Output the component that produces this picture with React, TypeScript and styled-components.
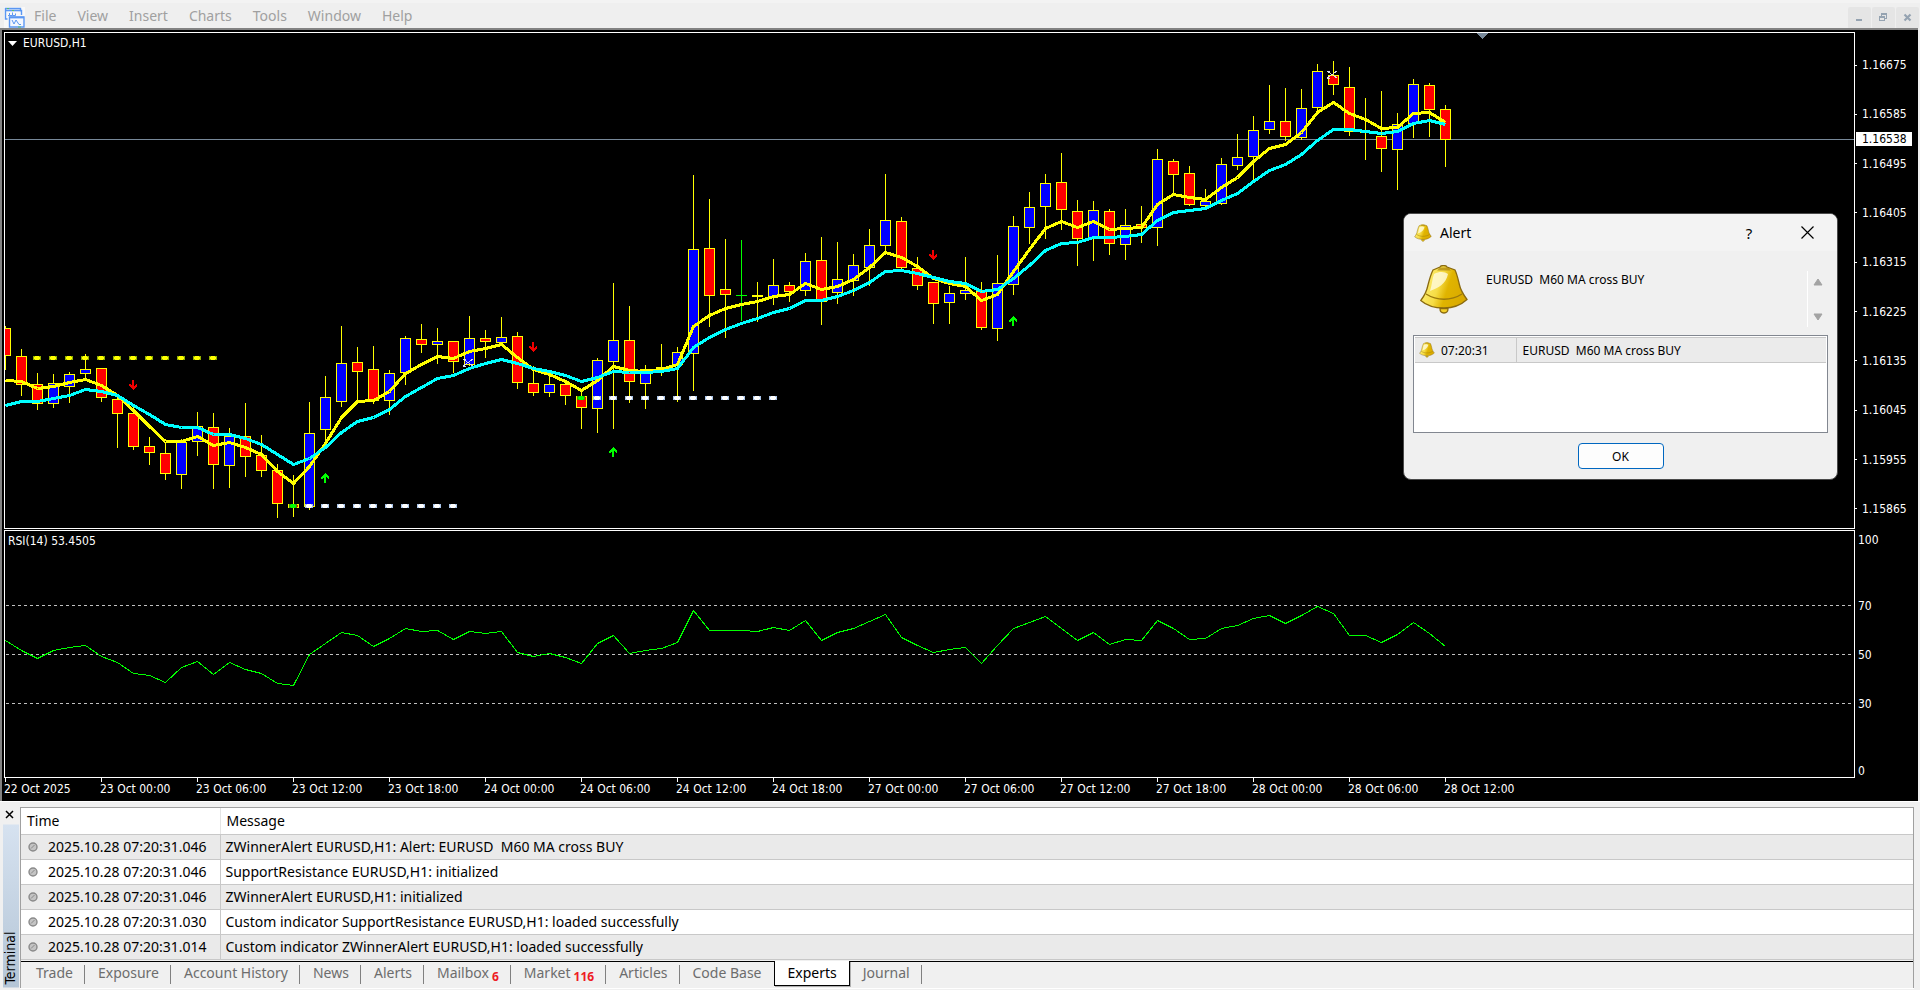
import React from "react";
import styled, { createGlobalStyle, css } from "styled-components";

const UI_FONT = '"Noto Sans", "Open Sans", sans-serif';
const CHART_FONT = '"DejaVu Sans Condensed", "DejaVu Sans", sans-serif';

const GlobalStyle = createGlobalStyle`
  *, *::before, *::after { box-sizing: border-box; }
  body { margin: 0; background: #f0f0f0; font-family: ${UI_FONT}; font-size: 14px; color: #000; }
  button { font: inherit; color: inherit; background: none; border: 0; padding: 0; margin: 0; }
  svg { display: block; }
`;

/* ---------- data ---------- */

type Tone = "up" | "down" | "flat" | "doji";
type Candle = [high: number, low: number, top: number, bottom: number, tone: Tone];

const STEP = 16;
const PRICE_TOP = 33;
const RSI_TOP = 531;

const candles: Candle[] = [
  [326, 369, 328, 355, "down"], [349, 395, 356, 384, "down"], [373, 409, 384, 403, "down"],
  [374, 407, 383, 403, "up"], [372, 402, 374, 386, "up"], [354, 380, 369, 373, "up"],
  [368, 401, 368, 397, "down"], [395, 447, 399, 413, "down"], [406, 449, 413, 446, "down"],
  [437, 464, 446, 452, "down"], [442, 479, 453, 473, "down"], [439, 488, 442, 474, "up"],
  [412, 455, 426, 441, "up"], [413, 488, 427, 464, "down"], [428, 487, 436, 465, "up"],
  [403, 476, 436, 456, "down"], [435, 476, 455, 470, "down"], [464, 517, 470, 503, "down"],
  [475, 516, 504, 507, "down"], [402, 509, 433, 506, "up"], [376, 446, 397, 429, "up"],
  [326, 406, 363, 401, "up"], [347, 402, 362, 371, "down"], [346, 403, 369, 400, "down"],
  [370, 414, 373, 400, "up"], [336, 384, 338, 372, "up"], [324, 352, 339, 344, "down"],
  [328, 363, 341, 344, "up"], [341, 372, 341, 361, "down"], [316, 365, 338, 364, "up"],
  [330, 357, 338, 341, "down"], [317, 344, 337, 342, "up"], [332, 388, 336, 382, "down"],
  [366, 395, 383, 392, "down"], [375, 396, 384, 392, "up"], [382, 404, 384, 395, "down"],
  [390, 428, 396, 407, "down"], [358, 432, 360, 408, "up"], [283, 428, 340, 361, "up"],
  [306, 402, 340, 381, "down"], [365, 408, 369, 383, "up"], [344, 375, 367, 369, "up"],
  [347, 401, 352, 364, "up"], [175, 390, 249, 353, "up"], [199, 326, 248, 295, "down"],
  [239, 337, 289, 294, "down"], [240, 320, 295, 295, "flat"], [282, 321, 295, 296, "doji"],
  [259, 304, 285, 296, "up"], [282, 301, 285, 291, "down"], [253, 295, 261, 290, "up"],
  [237, 324, 260, 301, "down"], [242, 303, 279, 292, "up"], [254, 295, 265, 280, "up"],
  [229, 285, 245, 267, "up"], [174, 253, 220, 245, "up"], [217, 270, 221, 267, "down"],
  [257, 289, 268, 285, "down"], [282, 323, 282, 303, "down"], [286, 323, 293, 302, "up"],
  [257, 299, 290, 293, "up"], [282, 329, 291, 327, "down"], [255, 340, 283, 328, "up"],
  [216, 294, 226, 284, "up"], [192, 243, 207, 227, "up"], [174, 238, 183, 206, "up"],
  [153, 229, 182, 209, "down"], [200, 265, 211, 238, "down"], [201, 260, 210, 237, "up"],
  [209, 254, 211, 243, "down"], [209, 259, 225, 244, "up"], [206, 242, 224, 227, "down"],
  [149, 245, 159, 227, "up"], [159, 195, 161, 174, "down"], [166, 205, 173, 204, "down"],
  [189, 209, 201, 205, "up"], [158, 204, 164, 203, "up"], [134, 169, 157, 165, "up"],
  [116, 180, 130, 156, "up"], [85, 133, 121, 129, "up"], [88, 140, 121, 136, "down"],
  [89, 139, 108, 137, "up"], [64, 113, 71, 107, "up"], [61, 94, 75, 84, "down"],
  [67, 135, 87, 131, "down"], [98, 159, 131, 132, "doji"], [91, 171, 136, 148, "down"],
  [113, 189, 124, 149, "up"], [79, 137, 84, 123, "up"], [83, 136, 85, 109, "down"],
  [105, 166, 109, 139, "down"],
];

const fastMa = [
  380, 381, 388, 386, 382, 379, 385, 395, 410, 426, 441, 441, 436, 445, 442, 447, 454, 471, 483, 466,
  443, 417, 401, 400, 391, 373, 364, 356, 358, 351, 348, 344, 357, 369, 374, 381, 390, 380, 366, 370,
  371, 369, 364, 326, 315, 308, 304, 301, 296, 294, 283, 289, 286, 279, 267, 252, 257, 266, 278, 283,
  286, 300, 294, 271, 249, 228, 221, 227, 221, 229, 228, 227, 204, 194, 197, 199, 187, 177, 161, 148,
  144, 132, 112, 102, 113, 119, 128, 127, 113, 112, 122,
];

const slowMa = [
  405, 401, 401, 398, 395, 389, 391, 395, 405, 414, 424, 427, 427, 434, 434, 438, 444, 454, 464, 458,
  447, 432, 421, 417, 409, 396, 387, 378, 375, 368, 363, 359, 363, 368, 371, 375, 381, 377, 371, 372,
  372, 371, 368, 347, 337, 329, 323, 318, 312, 308, 300, 300, 296, 290, 282, 271, 270, 273, 277, 281,
  283, 291, 289, 278, 265, 250, 243, 242, 237, 237, 236, 234, 220, 212, 210, 208, 200, 193, 181, 170,
  164, 154, 140, 129, 129, 131, 133, 131, 123, 120, 124,
];

const rsi = [
  640, 650, 658, 650, 647, 645, 656, 662, 673, 675, 682, 667, 661, 674, 662, 669, 673, 683, 685, 654,
  643, 632, 635, 646, 638, 628, 631, 630, 639, 631, 633, 631, 652, 656, 653, 657, 663, 643, 635, 653,
  650, 648, 642, 610, 630, 630, 630, 631, 627, 630, 620, 640, 632, 628, 621, 614, 637, 645, 652, 649,
  647, 663, 645, 628, 622, 616, 628, 640, 632, 644, 639, 640, 620, 628, 639, 638, 628, 625, 618, 615,
  623, 615, 606, 613, 635, 635, 642, 634, 622, 633, 646,
];

const range = (from: number, to: number) => Array.from({ length: to - from + 1 }, (_, k) => from + k);

const priceLabels = [
  "1.16675", "1.16585", "1.16495", "1.16405", "1.16315",
  "1.16225", "1.16135", "1.16045", "1.15955", "1.15865",
];

const timeLabels = [
  "22 Oct 2025", "23 Oct 00:00", "23 Oct 06:00", "23 Oct 12:00", "23 Oct 18:00", "24 Oct 00:00",
  "24 Oct 06:00", "24 Oct 12:00", "24 Oct 18:00", "27 Oct 00:00", "27 Oct 06:00", "27 Oct 12:00",
  "27 Oct 18:00", "28 Oct 00:00", "28 Oct 06:00", "28 Oct 12:00",
];

const logRows = [
  ["2025.10.28 07:20:31.046", "ZWinnerAlert EURUSD,H1: Alert: EURUSD  M60 MA cross BUY"],
  ["2025.10.28 07:20:31.046", "SupportResistance EURUSD,H1: initialized"],
  ["2025.10.28 07:20:31.046", "ZWinnerAlert EURUSD,H1: initialized"],
  ["2025.10.28 07:20:31.030", "Custom indicator SupportResistance EURUSD,H1: loaded successfully"],
  ["2025.10.28 07:20:31.014", "Custom indicator ZWinnerAlert EURUSD,H1: loaded successfully"],
];

const tabs: { name: string; count?: number }[] = [
  { name: "Trade" }, { name: "Exposure" }, { name: "Account History" }, { name: "News" },
  { name: "Alerts" }, { name: "Mailbox", count: 6 }, { name: "Market", count: 116 },
  { name: "Articles" }, { name: "Code Base" }, { name: "Experts" }, { name: "Journal" },
];

/* ---------- frame ---------- */

const Window = styled.div`
  position: relative;
  display: flex;
  flex-direction: column;
  min-height: 100vh;
  overflow: hidden;
`;

const MenuBar = styled.header`
  display: flex;
  align-items: center;
  height: 28px;
  padding: 4px 0 0 4px;
  border-top: 3px solid #f3f3f3;
  background: #efefef;
`;

const MenuList = styled.nav`
  display: flex;
  flex: 1;
  gap: 21px;
  padding: 0 0 3px 9px;
`;

const MenuItem = styled.button`
  line-height: 20px;
  color: #a0a0a0;
`;

const Logo = styled.svg`
  width: 21px;
  height: 21px;
  background: #f8f8f8;
`;

const WindowButtons = styled.div`
  display: flex;
  gap: 1px;
  padding-right: 1px;
`;

const WindowButton = styled.button`
  display: grid;
  place-items: center;
  width: 23px;
  height: 22px;
  border-radius: 2px;
  background: #e5e5e5;
  color: #95a3b1;
`;

const ChartFrame = styled.main`
  margin-right: 2px;
  padding: 2px 0 0 2px;
  border-top: 2px solid #828282;
  border-left: 2px solid #828282;
  background: #000;
  color: #fff;
  font: 12px/14px ${CHART_FONT};
`;

const PanelRow = styled.section<{ $height: number }>`
  display: grid;
  grid-template-columns: minmax(0, 1fr) 63px;
  height: ${(p) => p.$height}px;
  & + & { margin-top: 1px; }
`;

const Plot = styled.div`
  position: relative;
  border: 1px solid #fff;
  overflow: hidden;
`;

const PlotCanvas = styled.svg`
  width: 100%;
  height: 100%;
  shape-rendering: crispEdges;
`;

const PlotTitle = styled.div`
  position: absolute;
  top: 3px;
  left: 3px;
  display: flex;
  align-items: center;
  gap: 6px;
`;

const PriceAxis = styled.div`
  position: relative;
  display: flex;
  flex-direction: column;
  justify-content: space-between;
  padding: 26px 0 13px;
`;

const AxisLabel = styled.span`
  display: flex;
  align-items: center;
  gap: 5px;
  &::before { content: ""; width: 2px; height: 1px; background: #fff; }
`;

const CurrentPrice = styled.output`
  position: absolute;
  top: 100px;
  left: 1px;
  width: 56px;
  padding-left: 6px;
  background: #fff;
  color: #000;
`;

const RsiAxis = styled.div`
  display: grid;
  grid-template-rows: 51px repeat(3, 49px) 1fr;
  align-items: center;
  padding-left: 3px;
  & > :first-child { align-self: start; padding-top: 3px; }
  & > :last-child { align-self: end; }
`;

const TimeAxis = styled.div`
  display: flex;
  height: 23px;
  overflow: hidden;
`;

const TimeLabel = styled.span`
  flex: 0 0 96px;
  white-space: nowrap;
  &::before { content: ""; display: block; width: 1px; height: 4px; margin-left: 1px; background: #fff; }
`;

/* ---------- terminal ---------- */

const Terminal = styled.section`
  display: flex;
  flex: 1;
  padding: 5px 6px 3px 0;
  border-top: 1px solid #fff;
  background: #f0f0f0;
`;

const TerminalRail = styled.div`
  display: flex;
  flex-direction: column;
  width: 20px;
  padding-left: 3px;
`;

const RailClose = styled.button`
  display: grid;
  place-items: start center;
  width: 13px;
  height: 18px;
  padding-top: 3px;
`;

const RailTitle = styled.h2`
  flex: 1;
  width: 16px;
  margin: 0;
  padding-top: 3px;
  writing-mode: vertical-rl;
  transform: rotate(180deg);
  background: linear-gradient(#b4c5d6, #d6e2f0);
  font: 14px/14px ${CHART_FONT};
  text-align: left;
`;

const TerminalBody = styled.div`
  display: flex;
  flex: 1;
  flex-direction: column;
  border: solid #a0a0a0;
  border-width: 1px 1px 0 1px;
  box-shadow: 0 1px #fff;
`;

const LogTable = styled.table`
  width: 100%;
  table-layout: fixed;
  border-collapse: collapse;
  background: #fff;
`;

const cell = css`
  height: 25px;
  padding: 0 0 0 5px;
  border-bottom: 1px solid #c8c8c8;
  line-height: 20px;
  text-align: left;
  font-weight: 400;
  white-space: pre;
`;

const HeadCell = styled.th<{ $width?: number }>`
  ${cell}
  ${(p) => p.$width && `width: ${p.$width}px; border-right: 1px solid #e4e4e4;`}
  height: 26px;
  padding-left: 6px;
`;

const LogRow = styled.tr`
  &:nth-child(odd) { background: #eaeaea; }
`;

const TimeCell = styled.td`
  ${cell}
  border-right: 1px solid #c8c8c8;
`;

const MessageCell = styled.td`
  ${cell}
`;

const LogEntry = styled.span`
  display: flex;
  align-items: center;
  gap: 10px;
  padding-left: 2px;
`;

const TabBar = styled.div`
  display: flex;
  height: 27px;
  margin-top: 1px;
  padding-left: 2px;
  border-top: 1px solid #000;
`;

const Tab = styled.button<{ $active: boolean }>`
  position: relative;
  display: flex;
  height: 24px;
  padding: 0 12px 0 13px;
  line-height: 22px;
  color: #6d6d6d;
  &::after {
    content: "";
    position: absolute;
    top: 3px;
    right: 0;
    width: 1px;
    height: 19px;
    background: #808080;
  }
  &:has(+ [aria-selected="true"])::after { display: none; }
  ${(p) =>
    p.$active &&
    css`
      height: 25px;
      margin-top: -1px;
      border: solid #000;
      border-width: 0 1px 1px;
      background: #fff;
      color: #000;
      line-height: 24px;
      box-shadow: 1px 1px #b0b0b0;
      &::after { display: none; }
    `}
`;

const TabCount = styled.span`
  padding: 4px 0 0 3px;
  font-size: 12px;
  font-weight: 700;
  color: #ee1c25;
`;

/* ---------- alert ---------- */

const Dialog = styled.section`
  position: absolute;
  top: 213px;
  right: 82px;
  width: 435px;
  border: 1px solid #4a4a4a;
  border-radius: 8px;
  background: #f0f0f0;
  font-size: 12px;
  overflow: hidden;
`;

const DialogTitle = styled.header`
  display: flex;
  align-items: center;
  height: 37px;
  padding: 0 1px 0 10px;
  background: #f3f3f3;
`;

const DialogName = styled.h1`
  flex: 1;
  margin: 0 0 0 8px;
  font-size: 14px;
  font-weight: 400;
`;

const TitleButton = styled.button`
  display: grid;
  place-items: center;
  width: 58px;
  height: 36px;
  font-size: 15px;
`;

const DialogMessage = styled.div`
  display: grid;
  grid-template-columns: 50px 1fr 22px;
  column-gap: 17px;
  padding: 14px 8px 8px 15px;
`;

const MessageText = styled.p`
  margin: 6px 0 0;
  line-height: 18px;
  white-space: pre;
`;

const Scroller = styled.div`
  display: flex;
  flex-direction: column;
  justify-content: space-between;
  height: 56px;
  margin-top: 6px;
  padding: 6px 0 6px 4px;
  border-left: 1px solid #fff;
  color: #a3a3a3;
`;

const ArrowButton = styled.button`
  display: grid;
  place-items: center;
  width: 11px;
  height: 9px;
`;

const AlertList = styled.div`
  height: 98px;
  margin: 0 9px;
  padding: 1px;
  border: 1px solid #828790;
  background: #fff;
`;

const AlertTable = styled.table`
  width: 100%;
  border-collapse: collapse;
  background: #ebebeb;
`;

const AlertCell = styled.td<{ $width?: number }>`
  height: 25px;
  padding: 0 0 0 6px;
  border: solid #c8c8c8;
  border-width: 1px 0;
  white-space: pre;
  ${(p) => p.$width && `width: ${p.$width}px; padding-left: 4px; border-right-width: 1px;`}
`;

const AlertTime = styled.span`
  display: flex;
  align-items: center;
  gap: 6px;
`;

const DialogFooter = styled.footer`
  display: flex;
  justify-content: center;
  padding: 10px 0 10px;
`;

const OkButton = styled.button`
  width: 86px;
  height: 26px;
  border: 1px solid #0067c0;
  border-radius: 4px;
  background: #fdfdfd;
`;

/* ---------- drawings ---------- */

function BellIcon({ size }: { size: number }) {
  const id = `bell-${size}`;
  return (
    <svg width={size} height={size} viewBox="0 0 48 50" aria-hidden="true">
      <defs>
        <linearGradient id={id} x1="0" y1="0.3" x2="1" y2="0.6">
          <stop offset="0" stopColor="#fff27a" />
          <stop offset="0.4" stopColor="#f6dc45" />
          <stop offset="0.6" stopColor="#e0b400" />
          <stop offset="1" stopColor="#d9a900" />
        </linearGradient>
      </defs>
      <path d="M20 43.500c0 6 8 6 8 0z" fill="#f3cf28" stroke="#8a6a10" strokeWidth="1.300" />
      <path
        d="M13 5l7-3c1-2 6-2 7 0l8 3c2 4 3 9 4.500 15 1 5 3.500 9 7.500 14.500C40 41 32 43 24 43S7 41 .8 35.500C5 30 7 25 8 20c1.500-6 3-11 5-15z"
        fill={`url(#${id})`}
        stroke="#8a6a10"
        strokeWidth="1.300"
      />
      <path d="M14 9c6-3 11-2 14 0-2 10-10 14-18 17 2-6 2-12 4-17z" fill="#fffbe0" opacity="0.8" />
      <path d="M6 29c11 7 25 7 36 0" fill="none" stroke="#9a780c" strokeWidth="1.300" />
      <path d="M20 2.500h8l3 3H17z" fill="#a8820f" opacity="0.7" />
    </svg>
  );
}

function AppLogo() {
  return (
    <Logo viewBox="0 0 21 21" fill="none" stroke="#5b97f2" aria-hidden="true">
      <path d="M5 1.500h11.500v2h1V8M5 1.500h-3.500v10.500h2" strokeWidth="1.400" />
      <path d="M2 3.500h15" strokeWidth="1.600" />
      <path d="M4 8.500h1.500V6m0 2.500h3V5.500m0 3h3l0-2" />
      <path d="M5.500 12V10h14.500v10H5.500V12" fill="#f4f8ff" strokeWidth="1.400" />
      <path d="M5.500 10.500h14.500" strokeWidth="1.800" />
      <path d="M8 13l2 4 2-4 3 4.500h2" />
      <path d="M3 1.500h2M8 3.500h2M14 20h3" stroke="#59c26a" />
    </Logo>
  );
}

function CandleMark({ x, candle }: { x: number; candle: Candle }) {
  const [high, low, top, bottom, tone] = candle;
  const line = tone === "flat" ? "#00ff00" : "#ffff00";
  const fill = tone === "up" ? "#0000ff" : "#ff0000";
  return (
    <g>
      <rect x={x} y={high} width="1" height={low - high + 1} fill={line} />
      <rect x={x - 5} y={top} width="11" height={bottom - top + 1} fill={line} />
      {bottom - top > 1 && (
        <rect x={x - 4} y={top + 1} width="9" height={bottom - top - 1} fill={fill} />
      )}
    </g>
  );
}

function Dash({ index, y, tone }: { index: number; y: number; tone: "support" | "resistance" | "first" }) {
  const x = index * STEP;
  const edge = { support: "#a9c4e8", resistance: "#8fae00", first: "#3c9a00" }[tone];
  const core = { support: "#ffffff", resistance: "#ffff00", first: "#00ff00" }[tone];
  return (
    <g>
      <rect x={x - 4} y={y} width="8" height="4" fill={edge} />
      <rect x={x - 2} y={y} width="4" height="4" fill={core} />
      <rect x={x - 3} y={y + 1} width="6" height="2" fill={core} />
    </g>
  );
}

function SignalArrow({ index, y, up }: { index: number; y: number; up?: boolean }) {
  const x = index * STEP;
  const d = up
    ? `M${x - 1} ${y + 10}v-6l-2 2h-1v-2l4-4 4 4v2h-1l-2-2v6z`
    : `M${x - 1} ${y}v6l-2-2h-1v2l4 4 4-4v-2h-1l-2 2v-6z`;
  return <path d={d} fill={up ? "#00ff00" : "#f00000"} />;
}

function StopMark({ x, y }: { x: number; y: number }) {
  return (
    <path
      d={`M${x} ${y}l10 7M${x} ${y + 7}l10-7M${x} ${y + 7}h3M${x} ${y}h3`}
      fill="none"
      stroke="#d8dce8"
      strokeWidth="1"
    />
  );
}

const toPoints = (values: number[]) => values.map((y, i) => `${i * STEP + 0.5},${y + 0.5}`).join(" ");

function PriceChart() {
  return (
    <PlotCanvas role="img" aria-label="EURUSD hourly candles with two moving averages">
      <g transform={`translate(0 ${-PRICE_TOP})`}>
        <rect x="0" y="139" width="100%" height="1" fill="#778899" />
        {candles.map((c, i) => (
          <CandleMark key={i} x={i * STEP} candle={c} />
        ))}
        <polyline points={toPoints(fastMa)} fill="none" stroke="#ffff00" strokeWidth="3" />
        <polyline points={toPoints(slowMa)} fill="none" stroke="#00ffff" strokeWidth="3" />
        {range(2, 13).map((i) => <Dash key={i} index={i} y={356} tone="resistance" />)}
        {range(18, 28).map((i) => <Dash key={i} index={i} y={504} tone={i === 18 ? "first" : "support"} />)}
        {range(36, 48).map((i) => <Dash key={i} index={i} y={396} tone={i === 36 ? "first" : "support"} />)}
        <SignalArrow index={8} y={380} />
        <SignalArrow index={33} y={342} />
        <SignalArrow index={58} y={250} />
        <SignalArrow index={20} y={473} up />
        <SignalArrow index={38} y={447} up />
        <SignalArrow index={63} y={316} up />
        <StopMark x={458} y={359} />
        <StopMark x={1322} y={71} />
        <path d="M1472 33h11l-5.500 6z" fill="#778899" />
      </g>
    </PlotCanvas>
  );
}

function RsiChart() {
  return (
    <PlotCanvas role="img" aria-label="RSI oscillator">
      <g transform={`translate(0 ${-RSI_TOP})`}>
        {[605, 654, 703].map((y) => (
          <line key={y} x1="1" x2="100%" y1={y + 0.5} y2={y + 0.5} stroke="#c0c0c0" strokeDasharray="3 3" />
        ))}
        <polyline points={toPoints(rsi)} fill="none" stroke="#00ff00" />
      </g>
    </PlotCanvas>
  );
}

/* ---------- sections ---------- */

function TopMenu() {
  return (
    <MenuBar>
      <AppLogo />
      <MenuList aria-label="Main menu">
        {["File", "View", "Insert", "Charts", "Tools", "Window", "Help"].map((name) => (
          <MenuItem key={name} type="button">{name}</MenuItem>
        ))}
      </MenuList>
      <WindowButtons>
        <WindowButton type="button" aria-label="Minimize">
          <svg width="9" height="9" shapeRendering="crispEdges"><path d="M1 6h6v2H1z" fill="currentColor" /></svg>
        </WindowButton>
        <WindowButton type="button" aria-label="Restore">
          <svg width="9" height="9" shapeRendering="crispEdges" fill="currentColor">
            <path d="M2 0h6v6H6V5h1V2H3v1H2z" />
            <path d="M0 3h6v5H0zM1 5v2h4V5z" fillRule="evenodd" />
          </svg>
        </WindowButton>
        <WindowButton type="button" aria-label="Close chart">
          <svg width="9" height="9"><path d="M1.500 1.500l6 6M7.500 1.500l-6 6" stroke="currentColor" strokeWidth="2.200" /></svg>
        </WindowButton>
      </WindowButtons>
    </MenuBar>
  );
}

function ChartWindow() {
  return (
    <ChartFrame>
      <PanelRow $height={497}>
        <Plot>
          <PriceChart />
          <PlotTitle>
            <svg width="9" height="5"><path d="M0 0h9l-4.500 5z" fill="#fff" /></svg>
            EURUSD,H1
          </PlotTitle>
        </Plot>
        <PriceAxis>
          {priceLabels.map((label) => <AxisLabel key={label}>{label}</AxisLabel>)}
          <CurrentPrice>1.16538</CurrentPrice>
        </PriceAxis>
      </PanelRow>
      <PanelRow $height={248}>
        <Plot>
          <RsiChart />
          <PlotTitle>RSI(14) 53.4505</PlotTitle>
        </Plot>
        <RsiAxis>
          {[100, 70, 50, 30, 0].map((level) => <span key={level}>{level}</span>)}
        </RsiAxis>
      </PanelRow>
      <TimeAxis>
        {timeLabels.map((label) => <TimeLabel key={label}>{label}</TimeLabel>)}
      </TimeAxis>
    </ChartFrame>
  );
}

function TerminalPanel() {
  return (
    <Terminal>
      <TerminalRail>
        <RailClose type="button" aria-label="Close terminal">
          <svg width="9" height="9"><path d="M1 1l7 7M8 1l-7 7" stroke="#000" strokeWidth="1.500" /></svg>
        </RailClose>
        <RailTitle>Terminal</RailTitle>
      </TerminalRail>
      <TerminalBody>
        <LogTable>
          <thead>
            <tr>
              <HeadCell $width={199}>Time</HeadCell>
              <HeadCell>Message</HeadCell>
            </tr>
          </thead>
          <tbody>
            {logRows.map(([time, message]) => (
              <LogRow key={time + message}>
                <TimeCell>
                  <LogEntry>
                    <svg width="10" height="10">
                      <circle cx="5" cy="5" r="4" fill="#c4c4c4" stroke="#8a8a8a" strokeWidth="1.400" />
                      <path d="M3 6.500L6.500 3" stroke="#8a8a8a" />
                    </svg>
                    {time}
                  </LogEntry>
                </TimeCell>
                <MessageCell>{message}</MessageCell>
              </LogRow>
            ))}
          </tbody>
        </LogTable>
        <TabBar role="tablist">
          {tabs.map(({ name, count }) => (
            <Tab
              key={name}
              type="button"
              role="tab"
              aria-selected={name === "Experts"}
              $active={name === "Experts"}
            >
              {name}
              {count !== undefined && <TabCount>{count}</TabCount>}
            </Tab>
          ))}
        </TabBar>
      </TerminalBody>
    </Terminal>
  );
}

function AlertDialog() {
  const text = "EURUSD  M60 MA cross BUY";
  return (
    <Dialog role="dialog" aria-labelledby="alert-name">
      <DialogTitle>
        <BellIcon size={18} />
        <DialogName id="alert-name">Alert</DialogName>
        <TitleButton type="button" aria-label="Help">?</TitleButton>
        <TitleButton type="button" aria-label="Close">
          <svg width="13" height="13"><path d="M.5.5l12 12M12.500.5l-12 12" stroke="#000" strokeWidth="1.200" /></svg>
        </TitleButton>
      </DialogTitle>
      <DialogMessage>
        <BellIcon size={50} />
        <MessageText>{text}</MessageText>
        <Scroller>
          <ArrowButton type="button" aria-label="Scroll up">
            <svg width="10" height="8"><path d="M5 1l4 6H1z" fill="currentColor" stroke="currentColor" strokeLinejoin="round" /></svg>
          </ArrowButton>
          <ArrowButton type="button" aria-label="Scroll down">
            <svg width="10" height="8"><path d="M5 7l4-6H1z" fill="currentColor" stroke="currentColor" strokeLinejoin="round" /></svg>
          </ArrowButton>
        </Scroller>
      </DialogMessage>
      <AlertList>
        <AlertTable>
          <tbody>
            <tr>
              <AlertCell $width={101}>
                <AlertTime><BellIcon size={16} />07:20:31</AlertTime>
              </AlertCell>
              <AlertCell>{text}</AlertCell>
            </tr>
          </tbody>
        </AlertTable>
      </AlertList>
      <DialogFooter>
        <OkButton type="button">OK</OkButton>
      </DialogFooter>
    </Dialog>
  );
}

export default function App() {
  return (
    <Window>
      <GlobalStyle />
      <TopMenu />
      <ChartWindow />
      <TerminalPanel />
      <AlertDialog />
    </Window>
  );
}
